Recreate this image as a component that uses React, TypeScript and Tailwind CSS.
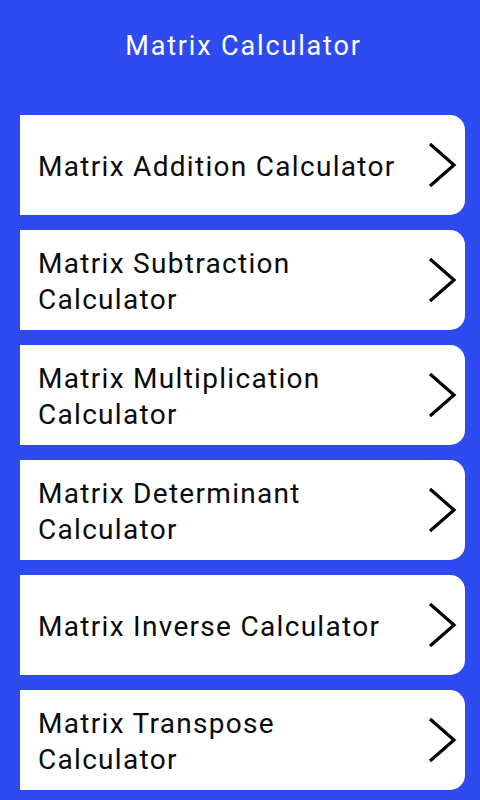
import React from 'react';

const items = [
  ['Matrix Addition Calculator'],
  ['Matrix Subtraction', 'Calculator'],
  ['Matrix Multiplication', 'Calculator'],
  ['Matrix Determinant', 'Calculator'],
  ['Matrix Inverse Calculator'],
  ['Matrix Transpose', 'Calculator'],
];

const Chevron = () => (
  <svg width="30" height="46" viewBox="0 0 30 46" fill="none" className="shrink-0">
    <polyline points="3,2 27,23 3,44" stroke="#000" strokeWidth="3.2" strokeLinejoin="miter" />
  </svg>
);

export default function App() {
  return (
    <div
      className="w-[480px] h-[800px] overflow-hidden bg-[#2e4bf1] flex flex-col"
      style={{ fontFamily: 'Roboto, "Noto Sans", sans-serif' }}
    >
      <div className="h-[115px] shrink-0 flex justify-center pt-[28px] pl-[7px]">
        <h1 className="text-white text-[27px] leading-[36px] font-normal tracking-[1.85px]">Matrix Calculator</h1>
      </div>
      <div className="flex flex-col gap-[15px] pl-[20px] pr-[15px]">
        {items.map((lines, i) => (
          <div
            key={i}
            className="h-[100px] shrink-0 bg-white rounded-r-[15px] flex items-center justify-between pl-[18px] pr-[8px]"
          >
            <div className="pt-[4px] text-[#0a0a0a] text-[28px] leading-[36px] tracking-[1.3px]">
              {lines.map((l, j) => (
                <div key={j}>{l}</div>
              ))}
            </div>
            <Chevron />
          </div>
        ))}
      </div>
    </div>
  );
}
